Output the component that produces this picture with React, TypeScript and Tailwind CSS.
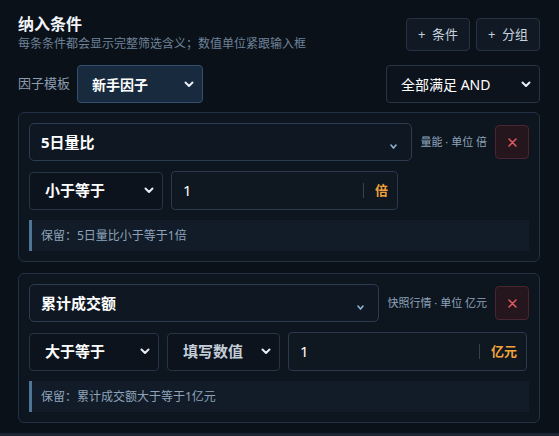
import React from 'react';

const FONT = { fontFamily: '"Noto Sans", "Noto Sans CJK SC", sans-serif' };

function Chevron({ className = '' }: { className?: string }) {
  return (
    <svg width="10" height="7" viewBox="0 0 10 7" className={className} fill="none">
      <polyline points="1.5,1.5 5,5 8.5,1.5" stroke="currentColor" strokeWidth="2" strokeLinecap="round" strokeLinejoin="round" />
    </svg>
  );
}

function SmallChevron() {
  return (
    <svg width="7" height="5" viewBox="0 0 7 5" fill="none" className="text-[#8fb0cf]">
      <polyline points="1,1 3.5,4 6,1" stroke="currentColor" strokeWidth="1.6" strokeLinecap="round" />
    </svg>
  );
}

function CloseIcon() {
  return (
    <svg width="9" height="9" viewBox="0 0 9 9" fill="none" className="text-[#e25a5f]">
      <path d="M1 1L8 8M8 1L1 8" stroke="currentColor" strokeWidth="1.5" strokeLinecap="round" />
    </svg>
  );
}

function FakeSelect({ label, width, muted = false }: { label: string; width: string; muted?: boolean }) {
  return (
    <div
      className={`${width} h-[38px] flex items-center justify-between pl-[15px] pr-[8px] rounded-[4px] border border-[#263446] bg-[#0c131c]`}
    >
      <span className={`text-[15px] font-bold ${muted ? 'text-[#c3cdd8]' : 'text-white'}`}>{label}</span>
      <Chevron className="text-[#e6edf5]" />
    </div>
  );
}

function ValueInput({ width, unit }: { width: string; unit: string }) {
  return (
    <div className={`${width} h-[39px] flex items-center pl-[11px] pr-[9px] rounded-[4px] border border-[#2a394c] bg-[#0f1721]`}>
      <span className="flex-1 text-[15px] text-white">1</span>
      <span className="w-px h-[15px] bg-[#34414f] mr-[11px]" />
      <span className="text-[13px] font-bold text-[#f0a33c]">{unit}</span>
    </div>
  );
}

function ConditionCard({
  factor,
  meta,
  children,
  hint,
}: {
  factor: string;
  meta: string;
  children: React.ReactNode;
  hint: string;
}) {
  return (
    <div className="rounded-[6px] border border-[#223044] bg-[#0d151f] p-[10px] flex flex-col gap-[10px]">
      <div className="flex items-center gap-[8px]">
        <div className="flex-1 h-[38px] flex items-center justify-between pl-[11px] pr-[14px] rounded-[5px] border border-[#2c3c50] bg-[#0f1822]">
          <span className="text-[15px] font-bold text-white">{factor}</span>
          <span className="mt-[8px]"><SmallChevron /></span>
        </div>
        <span className="text-[11px] text-[#8ea3ba] whitespace-nowrap">{meta}</span>
        <button className="w-[34px] h-[34px] flex items-center justify-center rounded-[4px] border border-[#4a2530] bg-[#24161c]">
          <CloseIcon />
        </button>
      </div>
      <div className="flex items-center gap-[8px]">{children}</div>
      <div className="h-[31px] flex items-center pl-[9px] border-l-[3px] border-[#4f7597] bg-[#111c28] text-[12px] text-[#8ea3ba]">
        {hint}
      </div>
    </div>
  );
}

export default function App() {
  return (
    <div className="w-[559px] h-[436px] overflow-hidden bg-[#0b1119] flex flex-col" style={FONT}>
      <div className="px-[18px] pt-[12px] flex flex-col">
        <div className="flex items-start justify-between">
          <div className="flex flex-col">
            <h1 className="text-[16px] font-bold leading-[24px] text-[#f1f5f9]">纳入条件</h1>
            <p className="text-[12px] leading-[16px] text-[#6e8298]">每条条件都会显示完整筛选含义；数值单位紧跟输入框</p>
          </div>
          <div className="flex gap-[6px] mt-[6px] mr-[1px]">
            <button className="w-[64px] h-[33px] rounded-[4px] border border-[#263244] bg-[#111924] text-[13px] text-[#c5d1de]">
              +&nbsp;&nbsp;条件
            </button>
            <button className="w-[64px] h-[33px] rounded-[4px] border border-[#263244] bg-[#111924] text-[13px] text-[#c5d1de]">
              +&nbsp;&nbsp;分组
            </button>
          </div>
        </div>

        <div className="mt-[13px] flex items-center justify-between mr-[1px]">
          <div className="flex items-center gap-[7px]">
            <span className="text-[13px] text-[#8b9cb1]">因子模板</span>
            <div className="w-[126px] h-[38px] flex items-center justify-between pl-[14px] pr-[8px] rounded-[4px] border border-[#33516e] bg-[#172a3e]">
              <span className="text-[14px] font-bold text-white">新手因子</span>
              <Chevron className="text-[#e6edf5]" />
            </div>
          </div>
          <div className="w-[154px] h-[38px] flex items-center justify-between pl-[14px] pr-[8px] rounded-[4px] border border-[#263446] bg-[#0c131c]">
            <span className="text-[14px] text-white">全部满足 AND</span>
            <Chevron className="text-[#e6edf5]" />
          </div>
        </div>

        <div className="mt-[9px] flex flex-col gap-[11px] mr-[1px]">
          <ConditionCard factor="5日量比" meta="量能 · 单位 倍" hint="保留：5日量比小于等于1倍">
            <FakeSelect label="小于等于" width="w-[134px]" />
            <ValueInput width="w-[227px]" unit="倍" />
          </ConditionCard>
          <ConditionCard factor="累计成交额" meta="快照行情 · 单位 亿元" hint="保留：累计成交额大于等于1亿元">
            <FakeSelect label="大于等于" width="w-[130px]" />
            <FakeSelect label="填写数值" width="w-[113px]" muted />
            <ValueInput width="w-[239px]" unit="亿元" />
          </ConditionCard>
        </div>
      </div>
      <div className="mt-auto h-[3px] bg-[#1b2430]" />
    </div>
  );
}
